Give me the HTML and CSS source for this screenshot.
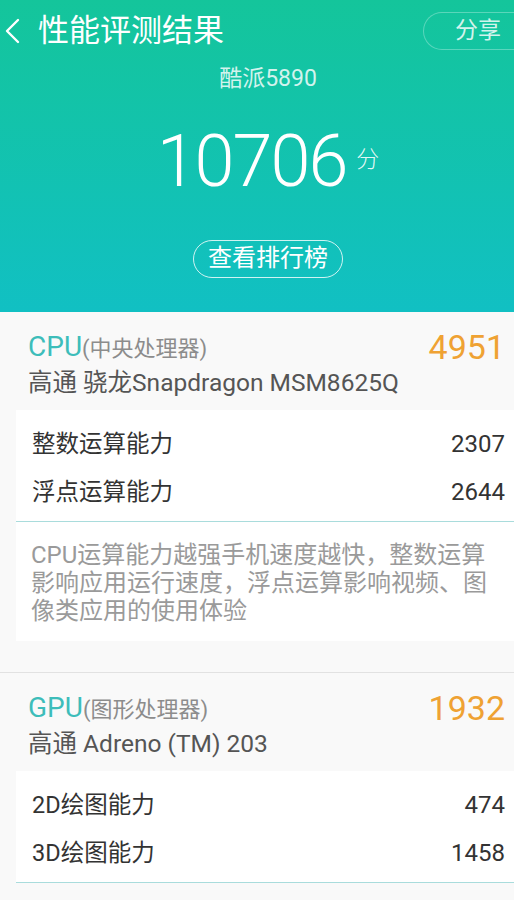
FILE: index.html
```html
<!DOCTYPE html>
<html>
<head lang="zh">
    <meta charset="UTF-8">
    <title>性能评测结果</title>
    <link rel="stylesheet" href="styles.css">
</head>
<body>
<div class="top">
    <div class="bar">
        <a href="javascript:;" class="back">
            <svg width="20" height="28" viewBox="0 0 20 28"><path d="M15 3 L4 14 L15 25" fill="none" stroke="#fff" stroke-width="2.4" stroke-linecap="round" stroke-linejoin="round"/></svg>
        </a>
        <h1>性能评测结果</h1>
        <a href="javascript:;" class="share">分享</a>
    </div>
    <div class="model">酷派5890</div>
    <div class="score">10706<span>分</span></div>
    <div class="rankWrap"><a href="javascript:;" class="rank">查看排行榜</a></div>
</div>

<div class="part">
    <div class="partHead">
        <div>
            <div class="partName"><b>CPU</b>(中央处理器)</div>
            <div class="chip">高通 骁龙Snapdragon MSM8625Q</div>
        </div>
        <div class="partScore">4951</div>
    </div>
    <div class="partBody">
        <ul class="rows">
            <li><span>整数运算能力</span><em>2307</em></li>
            <li><span>浮点运算能力</span><em>2644</em></li>
        </ul>
        <p class="note">CPU运算能力越强手机速度越快，整数运算影响应用运行速度，浮点运算影响视频、图像类应用的使用体验</p>
    </div>
</div>

<div class="part second">
    <div class="partHead">
        <div>
            <div class="partName"><b>GPU</b>(图形处理器)</div>
            <div class="chip">高通 Adreno (TM) 203</div>
        </div>
        <div class="partScore">1932</div>
    </div>
    <div class="partBody">
        <ul class="rows">
            <li><span>2D绘图能力</span><em>474</em></li>
            <li><span>3D绘图能力</span><em>1458</em></li>
        </ul>
    </div>
</div>
</body>
</html>
```

FILE: styles.css
```css
* {
    margin: 0;
    padding: 0;
}

body {
    width: 514px;
    overflow: hidden;
    background-color: #f9f9f9;
    font-family: Roboto, "Noto Sans CJK SC", sans-serif;
    color: #333;
}

a {
    text-decoration: none;
    color: inherit;
}

.top {
    height: 312px;
    background: linear-gradient(#14c59b, #11c0c3);
    color: #fff;
}

.top .bar {
    height: 62px;
    display: flex;
    align-items: center;
}

.top .back {
    display: flex;
    width: 20px;
    margin: 0 15px 0 3px;
}

.top h1 {
    flex: 1;
    font-size: 31px;
    font-weight: normal;
    line-height: 40px;
}

.top .share {
    width: 110px;
    height: 38px;
    margin-right: -19px;
    box-sizing: border-box;
    border: 1px solid rgba(255, 255, 255, 0.3);
    border-right: none;
    border-radius: 19px 0 0 19px;
    padding-left: 31px;
    font-size: 23px;
    line-height: 36px;
    color: rgba(255, 255, 255, 0.82);
}

.top .model,
.top .score,
.top .rankWrap {
    padding-left: 22px;
    text-align: center;
}

.top .model {
    font-size: 23px;
    line-height: 34px;
    color: rgba(255, 255, 255, 0.82);
}

.top .score {
    display: flex;
    justify-content: center;
    align-items: flex-start;
    margin-top: 26px;
    font-size: 72px;
    font-weight: 300;
    line-height: 80px;
    letter-spacing: -2px;
}

.top .score span {
    margin: 26px 0 0 10px;
    font-size: 23px;
    line-height: 23px;
    letter-spacing: 0;
    color: rgba(255, 255, 255, 0.9);
}

.top .rankWrap {
    margin-top: 38px;
}

.top .rank {
    display: inline-block;
    width: 150px;
    height: 38px;
    box-sizing: border-box;
    border: 1.5px solid rgba(255, 255, 255, 0.8);
    border-radius: 19px;
    font-size: 24px;
    line-height: 35px;
}

.part {
    background-color: #f9f9f9;
}

.part.second {
    margin-top: 31px;
    border-top: 1px solid #e2e2e2;
}

.partHead {
    display: flex;
    justify-content: space-between;
    height: 98px;
    box-sizing: border-box;
    padding: 17px 9px 0 28px;
}

.partName {
    font-size: 22px;
    line-height: 36px;
    color: #8c8c8c;
}

.partName b {
    font-size: 28px;
    font-weight: normal;
    color: #3dbdba;
}

.chip {
    font-size: 24.5px;
    line-height: 32px;
    color: #555;
}

.partScore {
    font-size: 34px;
    line-height: 36px;
    color: #efa233;
}

.partBody {
    margin-left: 16px;
    background-color: #fff;
}

.rows {
    list-style: none;
    padding: 10px 0 5px;
    border-bottom: 1px solid #a9dcdc;
}

.rows li {
    display: flex;
    justify-content: space-between;
    height: 48px;
    padding: 0 9px 0 16px;
    font-size: 23.5px;
    line-height: 48px;
    color: #333;
}

.rows li em {
    font-style: normal;
    font-size: 24px;
}

.note {
    padding: 19px 22px 16px 15px;
    font-size: 24px;
    line-height: 28px;
    color: #9a9a9a;
}
```
